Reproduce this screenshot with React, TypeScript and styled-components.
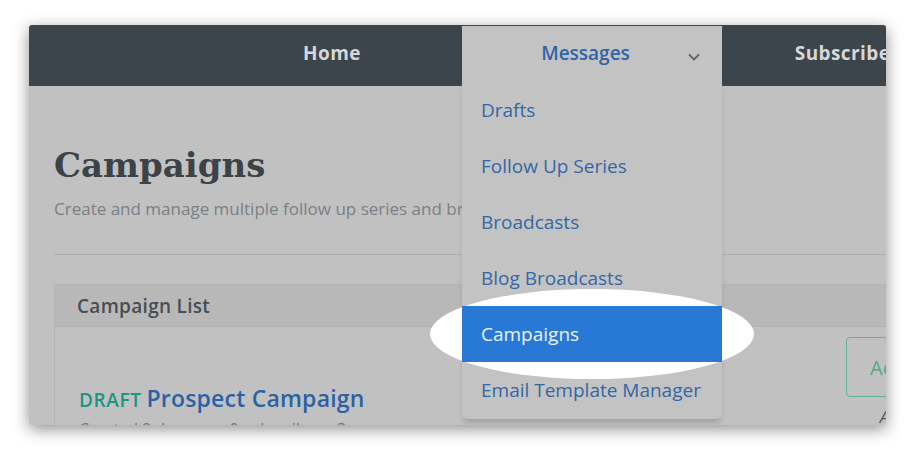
import React from 'react'
import styled, { createGlobalStyle } from 'styled-components'

const GlobalStyle = createGlobalStyle`
  html, body {
    margin: 0;
    padding: 0;
    background: #ffffff;
  }
  body {
    font-family: "Open Sans", "Noto Sans", "Liberation Sans", sans-serif;
  }
`

const menuItems = [
  'Drafts',
  'Follow Up Series',
  'Broadcasts',
  'Blog Broadcasts',
  'Campaigns',
  'Email Template Manager',
]

const App: React.FC = () => {
  return (
    <>
      <GlobalStyle />
      <Stage>
        <Window>
          <NavBar>
            <NavItem>Home</NavItem>
            <NavItem open>
              <Trigger>
                <TriggerLabel>Messages</TriggerLabel>
                <Chevron viewBox="0 0 12 8">
                  <polyline points="1,1.5 6,6.5 11,1.5" />
                </Chevron>
              </Trigger>
              <Menu>
                {menuItems.map(item => (
                  <MenuItem key={item} active={item === 'Campaigns'}>
                    {item}
                  </MenuItem>
                ))}
              </Menu>
            </NavItem>
            <NavItem>Subscribers</NavItem>
          </NavBar>
          <Main>
            <Title>Campaigns</Title>
            <Lead>Create and manage multiple follow up series and broadcasts together.</Lead>
            <Rule />
            <Panel>
              <PanelHeader>Campaign List</PanelHeader>
              <PanelBody>
                <CampaignInfo>
                  <CampaignTitle>
                    <Status>DRAFT</Status>
                    <CampaignName>Prospect Campaign</CampaignName>
                  </CampaignTitle>
                  <Meta>Created 2 days ago, 0 subscribers, 3 messages</Meta>
                </CampaignInfo>
                <Actions>
                  <ActivateButton>Activate</ActivateButton>
                  <ActionLink>Archive</ActionLink>
                </Actions>
              </PanelBody>
            </Panel>
          </Main>
        </Window>
      </Stage>
    </>
  )
}

export default App

const Stage = styled.div`
  padding: 25px 29px 33px 29px;
`
const Window = styled.div`
  width: 857px;
  height: 400px;
  overflow: hidden;
  border-radius: 3px;
  background: #c1c1c1;
  box-shadow: 0 4px 16px rgba(0, 0, 0, 0.45);
  position: relative;
`
const NavBar = styled.nav`
  display: flex;
  height: 61px;
  padding-left: 173px;
  background: #3c454c;
  width: 1100px;
`
const NavItem = styled.div<{ open?: boolean }>`
  position: relative;
  flex: 0 0 260px;
  display: flex;
  align-items: center;
  justify-content: center;
  align-self: flex-start;
  height: 56px;
  margin-top: 1px;
  padding-bottom: 3px;
  box-sizing: border-box;
  font-size: 19px;
  font-weight: ${props => (props.open ? 600 : 700)};
  letter-spacing: ${props => (props.open ? '0' : '0.4px')};
  color: ${props => (props.open ? '#2f65a6' : '#d6d7d8')};
  background: ${props => (props.open ? '#c3c3c3' : 'transparent')};
  z-index: ${props => (props.open ? 10 : 'auto')};
`
const Trigger = styled.div`
  display: flex;
  align-items: center;
  width: 100%;
  height: 100%;
  padding: 0 22px 0 21px;
  box-sizing: border-box;
`
const TriggerLabel = styled.span`
  flex: 1;
  text-align: center;
`
const Chevron = styled.svg`
  width: 12px;
  height: 8px;
  margin-top: 8px;
  fill: none;
  stroke: #5a6570;
  stroke-width: 1.8;
`
const Menu = styled.ul`
  position: absolute;
  top: 56px;
  left: 0;
  width: 260px;
  margin: 0;
  padding: 0 0 1px 0;
  list-style: none;
  background: #c3c3c3;
  border-radius: 0 0 5px 5px;
  box-shadow: 0 5px 6px -2px rgba(0, 0, 0, 0.2);
  z-index: 10;
`
const MenuItem = styled.li<{ active?: boolean }>`
  position: ${props => (props.active ? 'relative' : 'static')};
  display: flex;
  align-items: center;
  height: 56px;
  padding-left: 19px;
  font-size: 19px;
  font-weight: 400;
  color: ${props => (props.active ? '#eef3fa' : '#3467a6')};
  background: ${props => (props.active ? '#2878d6' : 'transparent')};

  &::before {
    content: '';
    display: ${props => (props.active ? 'block' : 'none')};
    position: absolute;
    left: -32px;
    top: -17px;
    width: 324px;
    height: 90px;
    border-radius: 50%;
    background: #ffffff;
    z-index: -1;
  }
`
const Main = styled.main`
  width: 987px;
  padding: 0 25px;
  box-sizing: border-box;
`
const Title = styled.h1`
  margin: 57px 0 0 0;
  font-family: "DejaVu Serif", "Liberation Serif", serif;
  font-size: 34px;
  font-weight: 700;
  line-height: 44px;
  color: #3b4349;
`
const Lead = styled.p`
  margin: 11px 0 0 0;
  font-size: 17px;
  line-height: 22px;
  color: #7a8086;
  white-space: nowrap;
`
const Rule = styled.hr`
  margin: 34px 0 0 0;
  border: none;
  border-top: 1px solid #ababab;
`
const Panel = styled.section`
  margin-top: 29px;
  border: 1px solid #b3b3b3;
  border-radius: 2px;
`
const PanelHeader = styled.div`
  height: 41px;
  display: flex;
  align-items: center;
  padding-left: 22px;
  background: #b8b8b8;
  border-bottom: 1px solid #b0b0b0;
  font-size: 19px;
  font-weight: 600;
  letter-spacing: 0.3px;
  color: #464e55;
`
const PanelBody = styled.div`
  display: flex;
  justify-content: space-between;
  align-items: flex-start;
  padding: 10px 22px 20px 24px;
`
const CampaignInfo = styled.div`
  padding-top: 46px;
`
const CampaignTitle = styled.div`
  display: flex;
  align-items: baseline;
  gap: 5px;
  line-height: 30px;
`
const Status = styled.span`
  font-size: 19px;
  font-weight: 600;
  letter-spacing: 0.6px;
  color: #1c9585;
`
const CampaignName = styled.span`
  font-size: 23px;
  font-weight: 600;
  letter-spacing: 0.2px;
  color: #2b62a4;
`
const Meta = styled.div`
  margin-top: 3px;
  font-size: 16px;
  line-height: 22px;
  color: #6f757a;
`
const Actions = styled.div`
  display: flex;
  flex-direction: column;
  align-items: center;
  gap: 8px;
`
const ActivateButton = styled.button`
  width: 122px;
  height: 60px;
  border: 1px solid #5db48f;
  border-radius: 4px;
  background: transparent;
  font-family: inherit;
  font-size: 20px;
  color: #4dae84;
`
const ActionLink = styled.span`
  font-size: 17px;
  font-style: italic;
  color: #4f575d;
`
